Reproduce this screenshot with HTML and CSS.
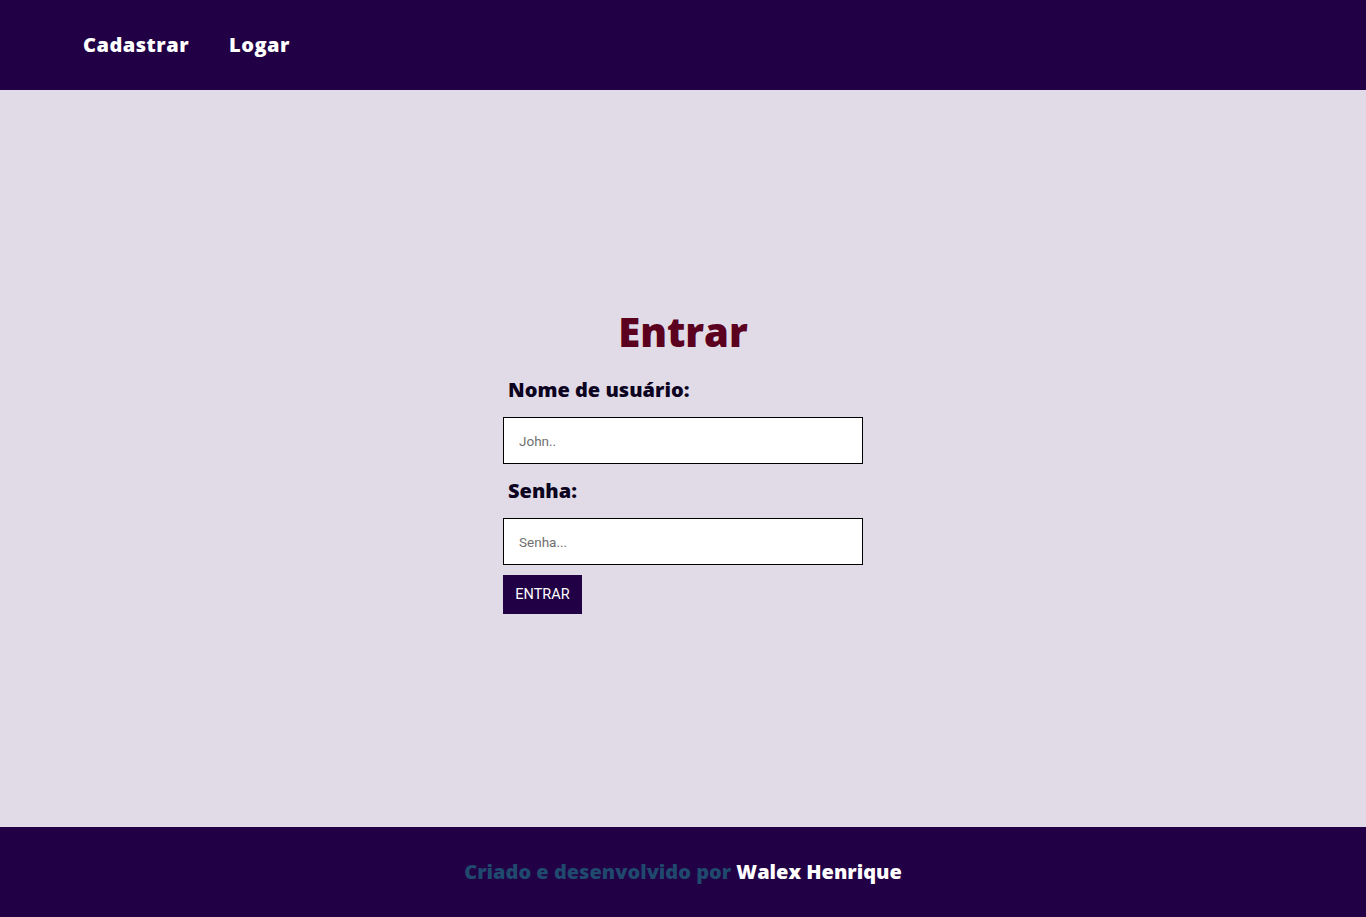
FILE: index.html
```html
<!DOCTYPE html>
<html lang="pt-BR">
<head>
<meta charset="utf-8">
<title>Entrar</title>
<link rel="stylesheet" href="styles.css">
</head>
<body>
<header class="topbar">
  <nav class="nav">
    <a class="nav-link" href="#">Cadastrar</a>
    <a class="nav-link" href="#">Logar</a>
  </nav>
</header>
<main class="main">
  <form class="login">
    <h1 class="login-title">Entrar</h1>
    <label class="field-label" for="user">Nome de usuário:</label>
    <input class="field-input" id="user" type="text" placeholder="John..">
    <label class="field-label" for="pass">Senha:</label>
    <input class="field-input" id="pass" type="password" placeholder="Senha...">
    <button class="btn" type="button">ENTRAR</button>
  </form>
</main>
<footer class="footer">
  <p class="footer-text">Criado e desenvolvido por <span class="footer-name">Walex Henrique</span></p>
</footer>
</body>
</html>
```
FILE: styles.css
```css
* { box-sizing: border-box; }
html, body { margin: 0; padding: 0; }
body {
  background: #e1dbe8;
  font-family: "Open Sans", "DejaVu Sans", sans-serif;
  min-height: 917px;
  display: flex;
  flex-direction: column;
}
.topbar {
  height: 90px;
  background: #220046;
  display: flex;
  align-items: center;
  padding-left: 83px;
  padding-bottom: 2px;
}
.nav { display: flex; gap: 40px; }
.nav-link {
  color: #ffffff;
  text-decoration: none;
  font-weight: 800;
  font-size: 20px;
  letter-spacing: 0.5px;
}
.main {
  flex: 1;
  display: flex;
  align-items: center;
  justify-content: center;
}
.login {
  width: 360px;
  display: flex;
  flex-direction: column;
  align-items: flex-start;
  margin-top: 3px;
}
.login-title {
  align-self: center;
  margin: 0 0 18px;
  color: #5c0020;
  font-size: 40px;
  line-height: 52px;
  font-weight: 800;
}
.field-label {
  color: #0c0420;
  font-size: 20px;
  font-weight: 800;
  line-height: 28px;
  padding-left: 5px;
  margin-bottom: 13px;
}
.field-input {
  width: 360px;
  height: 47px;
  border: 1px solid #000;
  background: #fff;
  padding: 0 15px;
  font-family: Roboto, sans-serif;
  font-size: 13.5px;
  margin: 0 0 13px;
  outline: none;
}
.field-input::placeholder { color: #6f6f6f; }
.btn {
  margin-top: -3px;
  width: 79px;
  height: 39px;
  border: none;
  background: #220046;
  color: #fff;
  font-family: Roboto, sans-serif;
  font-size: 14.5px;
  padding: 0;
}
.footer {
  height: 90px;
  background: #220046;
  display: flex;
  align-items: center;
  justify-content: center;
  padding-bottom: 2px;
}
.footer-text {
  margin: 0;
  color: #1f4a6e;
  font-size: 20px;
  font-weight: 800;
}
.footer-name { color: #fff; }
```
